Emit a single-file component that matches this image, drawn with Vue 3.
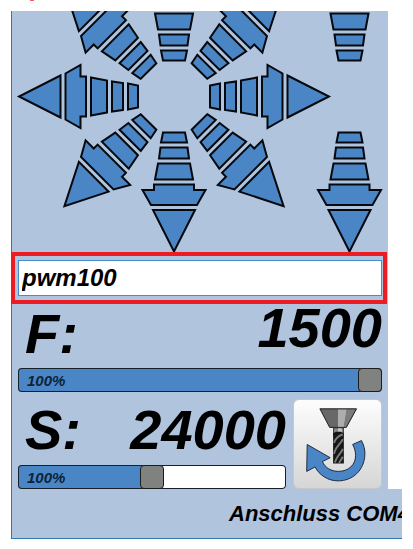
<script setup>
import { ref } from 'vue'

const command = ref('pwm100')
const feed = ref(100)
const spindle = ref(100)

// One jog arrow pointing right, measured from the centre of the pad.
const segments = [
  '36,-11 46,-13 46,13 36,11',
  '51,-13.5 62,-15 62,15 51,13.5',
  '67,-16 83,-19 83,19 67,16',
  '88,-20 93.5,-20 93.5,-31.5 108.5,-23 108.5,23 93.5,31.5 93.5,20 88,20',
  '113.5,-21 155,0 113.5,21',
]

const arrows = [
  ...[0, 45, 90, 135, 180, 225, 270, 315].map((angle) => ({ x: 174, angle })),
  ...[90, 270].map((angle) => ({ x: 349.5, angle })),
]

const fill = (value, max) => ({ '--level': value / max })
</script>

<template>
  <main class="page">
    <span class="mark"></span>
    <section class="panel">
      <svg class="jog" viewBox="12 11 376 241" role="img" aria-label="Jog">
        <g
          v-for="(arrow, i) in arrows"
          :key="i"
          :transform="`translate(${arrow.x} 96.5) rotate(${arrow.angle})`"
        >
          <polygon v-for="points in segments" :key="points" :points="points" />
        </g>
      </svg>

      <div class="command">
        <input v-model="command" type="text" aria-label="Command" />
      </div>

      <div class="controls">
        <div class="readout feed">
          <label for="feed">F:</label>
          <output for="feed">1500</output>
        </div>
        <div class="slider">
          <input id="feed" v-model.number="feed" type="range" min="0" max="100" :style="fill(feed, 100)" />
          <span>{{ feed }}%</span>
        </div>

        <div class="spindle">
          <div class="stack">
            <div class="readout">
              <label for="spindle">S:</label>
              <output for="spindle">24000</output>
            </div>
            <div class="slider">
              <input id="spindle" v-model.number="spindle" type="range" min="0" max="200" :style="fill(spindle, 200)" />
              <span>{{ spindle }}%</span>
            </div>
          </div>
          <button type="button" aria-label="Spindle">
            <svg viewBox="0 0 89 89">
              <defs>
                <clipPath id="bit"><rect x="40" y="33" width="11" height="31" /></clipPath>
              </defs>
              <path class="arc" d="M13.5 44.5 37 58 29 62C32 68.500 38 72 45.500 72 56 72 63 65 63 56 63 52 62 48 60 44.500L69 40.500C71.500 45 72.800 50 72.500 55 71.800 71 60 81.700 45 81.700 35 81.700 26 76 21.500 67.500L13 72Z" />
              <path d="M26.500 8H64L53.500 27H36.500Z" fill="#686868" />
              <path d="M45 8.500H54L51 26.500H45Z" fill="#adadad" />
              <path d="M54 8.500H63L53.200 26.500H51Z" fill="#7c7c7c" />
              <path d="M26.500 8H64L53.500 27H36.500Z" fill="none" stroke="#1c1c1c" />
              <rect x="40.500" y="27.500" width="10" height="7" fill="#8a8a8a" stroke="#333" />
              <path d="M45 28H49V32H45Z" fill="#c4c4c4" />
              <path d="M40 33 43 31.500H48L51 33V64H40Z" fill="#161616" />
              <g clip-path="url(#bit)">
                <path
                  d="M41 43C42 38 45 36 50 34M41 54C42 47 47 45 50 39M42 63C43 57 48 54 50 49M46 64C47 61 49 59 50 57"
                  fill="none"
                  stroke="#7b7b7b"
                  stroke-width="2"
                />
              </g>
            </svg>
          </button>
        </div>
      </div>
    </section>
    <footer>Anschluss COM4</footer>
  </main>
</template>

<style>
body {
  background: #fff;
}
</style>

<style scoped>
.page {
  position: relative;
  padding: 11px;
  font-family: "Liberation Sans", Arial, sans-serif;
  font-weight: bold;
  font-style: italic;
  color: #000;
}

.page * {
  box-sizing: border-box;
}

.mark {
  position: absolute;
  top: 0;
  left: 30px;
  width: 4px;
  height: 1px;
  background: #f4606a;
}

.panel {
  margin-right: 14px;
  background: #b0c4de;
  border-left: 1px solid #2f7ab5;
}

.jog {
  display: block;
  width: 100%;
}

.jog polygon {
  fill: #4a86c6;
  stroke: #05080c;
  stroke-width: 2;
}

.command {
  margin: 0 1px 0 -1px;
  padding: 4px 1px 4px 3px;
  border: 4px solid #ed1c24;
}

.command input {
  display: block;
  width: 100%;
  height: 36px;
  padding: 0 3px;
  border: 1px solid #4a8cca;
  border-radius: 0;
  outline: none;
  background: #fff;
  color: #000;
  font: inherit;
  font-size: 24px;
}

.controls {
  padding: 0 6px;
}

.readout {
  display: flex;
  justify-content: space-between;
  align-items: flex-start;
  height: 66px;
  padding-left: 7px;
  font-size: 56px;
  line-height: 62px;
}

.feed {
  height: 64px;
  line-height: 60px;
}

.feed output {
  line-height: 48px;
}

.slider {
  position: relative;
}

.slider input {
  display: block;
  width: 100%;
  height: 24px;
  margin: 0;
  appearance: none;
  border-radius: 4px;
  outline: none;
  box-shadow: inset 0 0 0 1px #16202c;
  background: linear-gradient(
    to right,
    #4a86c6 calc(12px + (100% - 24px) * var(--level)),
    #fff calc(12px + (100% - 24px) * var(--level))
  );
}

.slider input::-webkit-slider-thumb {
  appearance: none;
  width: 24px;
  height: 24px;
  border: 1px solid #1c1c1c;
  border-radius: 4px;
  background: #808280;
}

.slider span {
  position: absolute;
  left: 9px;
  top: 0;
  font-size: 15px;
  line-height: 26px;
  color: #0c2338;
  pointer-events: none;
}

.spindle {
  display: flex;
  gap: 7px;
  padding-top: 7px;
}

.stack {
  flex: 1;
  min-width: 0;
}

button {
  width: 89px;
  height: 90px;
  padding: 0;
  border: 1px solid #c8c8cc;
  border-radius: 6px;
  background: linear-gradient(#fdfdfd, #d6d6d6);
}

button svg {
  display: block;
  width: 100%;
}

.arc {
  fill: #4a86c6;
  stroke: #1b2a3a;
}

footer {
  height: 50px;
  padding-left: 217px;
  overflow: hidden;
  border-left: 1px solid #2f7ab5;
  border-bottom: 1px solid #2f7ab5;
  background: #b0c4de;
  font-size: 22px;
  line-height: 49px;
  white-space: nowrap;
}
</style>
